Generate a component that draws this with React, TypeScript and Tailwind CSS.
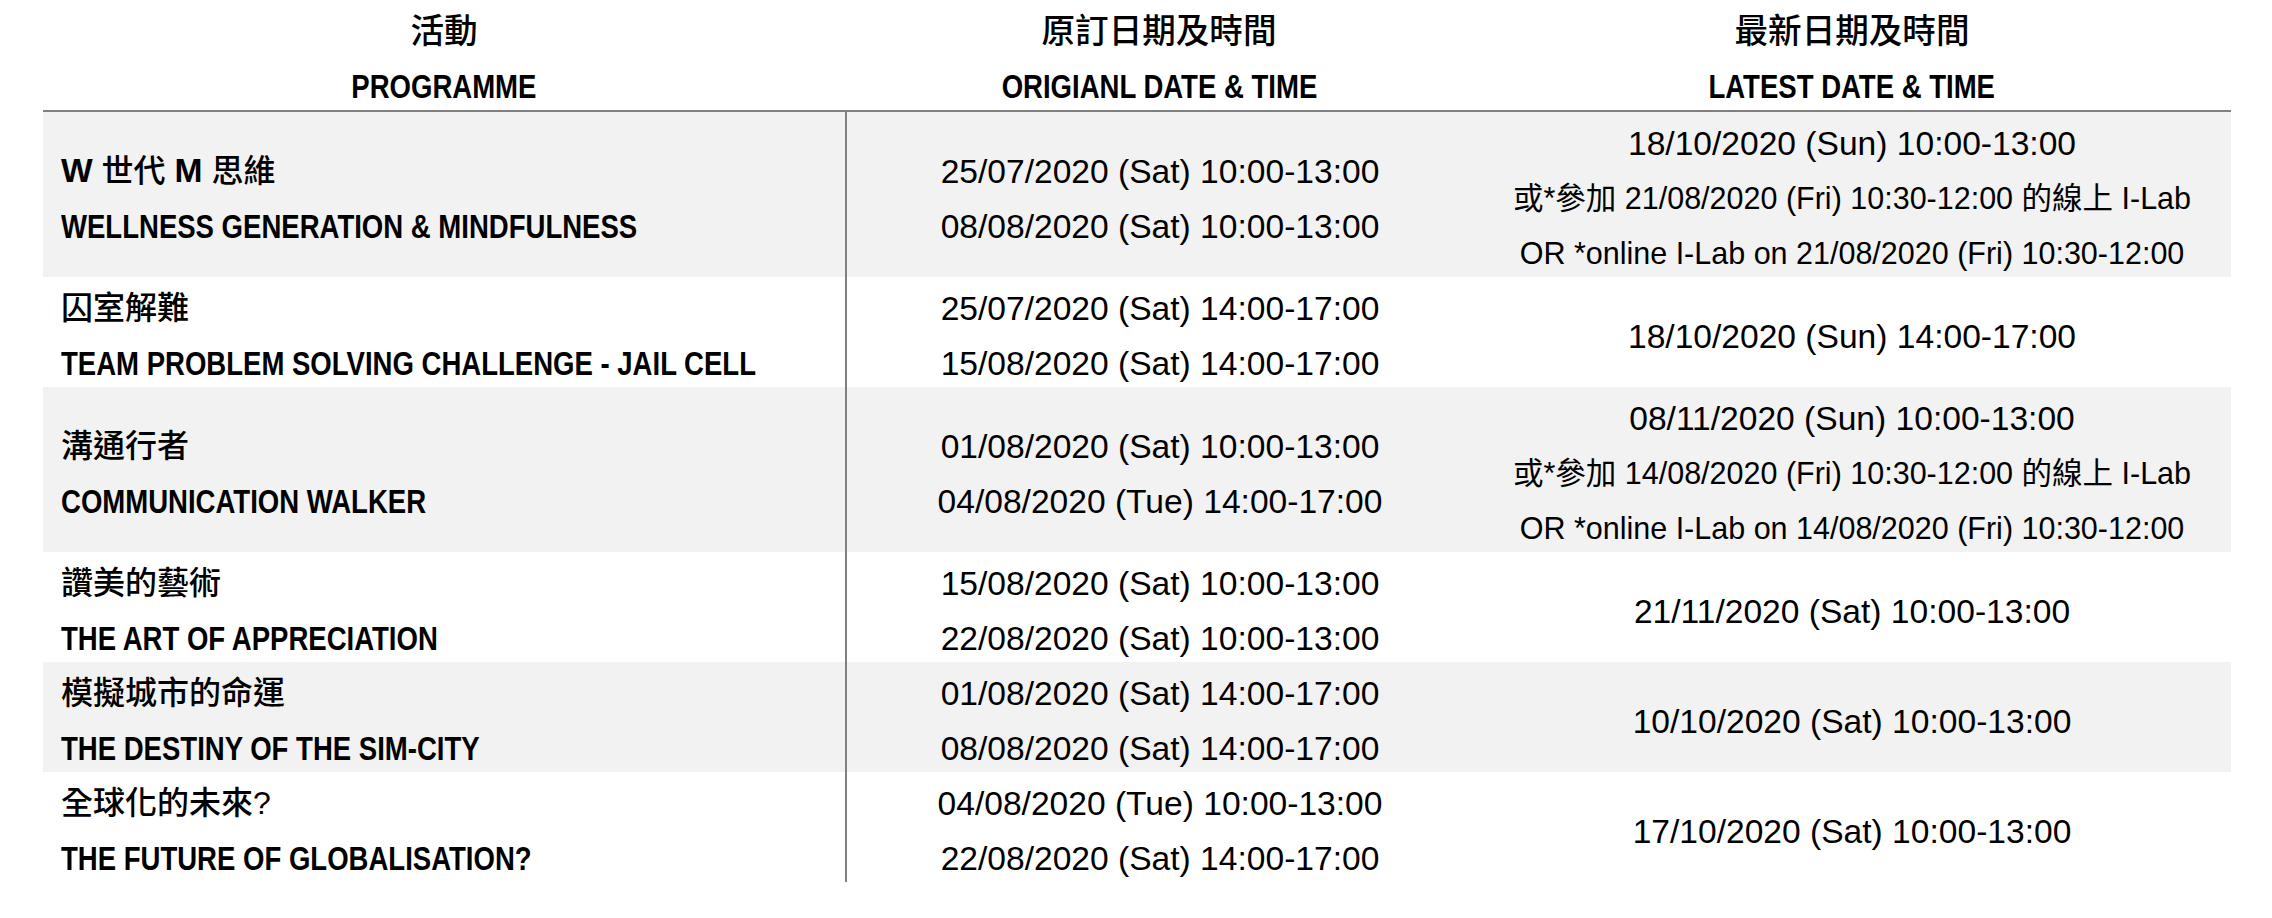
import React from "react";

type Row = {
  zh: React.ReactNode;
  en: string;
  original: string[];
  latest: string;
  extra?: string[];
  shaded: boolean;
};

// Arial Narrow isn't installed, so squeeze Liberation Sans Bold to its width
const Narrow = ({ children, origin = "origin-left" }: { children: React.ReactNode; origin?: string }) => (
  <span className={`inline-block whitespace-nowrap font-bold scale-x-[0.82] ${origin}`}>{children}</span>
);

const rows: Row[] = [
  {
    zh: (
      <>
        <span className="font-bold text-[33.6px]">W</span> 世代 <span className="font-bold text-[33.6px]">M</span> 思維
      </>
    ),
    en: "WELLNESS GENERATION & MINDFULNESS",
    original: ["25/07/2020 (Sat) 10:00-13:00", "08/08/2020 (Sat) 10:00-13:00"],
    latest: "18/10/2020 (Sun) 10:00-13:00",
    extra: ["或*參加 21/08/2020 (Fri) 10:30-12:00 的線上 I-Lab", "OR *online I-Lab on 21/08/2020 (Fri) 10:30-12:00"],
    shaded: true,
  },
  {
    zh: "囚室解難",
    en: "TEAM PROBLEM SOLVING CHALLENGE - JAIL CELL",
    original: ["25/07/2020 (Sat) 14:00-17:00", "15/08/2020 (Sat) 14:00-17:00"],
    latest: "18/10/2020 (Sun) 14:00-17:00",
    shaded: false,
  },
  {
    zh: "溝通行者",
    en: "COMMUNICATION WALKER",
    original: ["01/08/2020 (Sat) 10:00-13:00", "04/08/2020 (Tue) 14:00-17:00"],
    latest: "08/11/2020 (Sun) 10:00-13:00",
    extra: ["或*參加 14/08/2020 (Fri) 10:30-12:00 的線上 I-Lab", "OR *online I-Lab on 14/08/2020 (Fri) 10:30-12:00"],
    shaded: true,
  },
  {
    zh: "讚美的藝術",
    en: "THE ART OF APPRECIATION",
    original: ["15/08/2020 (Sat) 10:00-13:00", "22/08/2020 (Sat) 10:00-13:00"],
    latest: "21/11/2020 (Sat) 10:00-13:00",
    shaded: false,
  },
  {
    zh: "模擬城市的命運",
    en: "THE DESTINY OF THE SIM-CITY",
    original: ["01/08/2020 (Sat) 14:00-17:00", "08/08/2020 (Sat) 14:00-17:00"],
    latest: "10/10/2020 (Sat) 10:00-13:00",
    shaded: true,
  },
  {
    zh: "全球化的未來?",
    en: "THE FUTURE OF GLOBALISATION?",
    original: ["04/08/2020 (Tue) 10:00-13:00", "22/08/2020 (Sat) 14:00-17:00"],
    latest: "17/10/2020 (Sat) 10:00-13:00",
    shaded: false,
  },
];

const line = "pt-[8px] leading-[47px] whitespace-nowrap";

export default function App() {
  return (
    <div className="w-[2272px] h-[918px] bg-white text-black font-['Liberation_Sans','Noto_Sans_CJK_TC',sans-serif] text-[33.6px]">
      <div className="ml-[43px] w-[2188px] grid grid-cols-[802px_628px_758px]">
        <div className="text-center border-b-2 border-[#808080]">
          <div className={`${line} font-medium`}>活動</div>
          <div className={line}>
            <Narrow origin="origin-center">PROGRAMME</Narrow>
          </div>
        </div>
        <div className="text-center border-b-2 border-[#808080]">
          <div className={`${line} font-medium`}>原訂日期及時間</div>
          <div className={line}>
            <Narrow origin="origin-center">ORIGIANL DATE &amp; TIME</Narrow>
          </div>
        </div>
        <div className="text-center border-b-2 border-[#808080]">
          <div className={`${line} font-medium`}>最新日期及時間</div>
          <div className={line}>
            <Narrow origin="origin-center">LATEST DATE &amp; TIME</Narrow>
          </div>
        </div>

        {rows.map((r, i) => {
          const bg = r.shaded ? "bg-[#f2f2f2]" : "bg-white";
          return (
            <React.Fragment key={i}>
              <div className={`${bg} pl-[18px] flex flex-col justify-center overflow-hidden`}>
                <div className={`${line} text-[32px] font-medium`}>{r.zh}</div>
                <div className={line}>
                  <Narrow>{r.en}</Narrow>
                </div>
              </div>
              <div className={`${bg} border-l-2 border-[#808080] flex flex-col justify-center items-center`}>
                {r.original.map((d) => (
                  <div key={d} className={line}>
                    {d}
                  </div>
                ))}
              </div>
              <div className={`${bg} flex flex-col justify-center items-center`}>
                <div className={line}>{r.latest}</div>
                {r.extra?.map((e) => (
                  <div key={e} className={`${line} text-[30.5px]`}>
                    {e}
                  </div>
                ))}
              </div>
            </React.Fragment>
          );
        })}
      </div>
    </div>
  );
}
